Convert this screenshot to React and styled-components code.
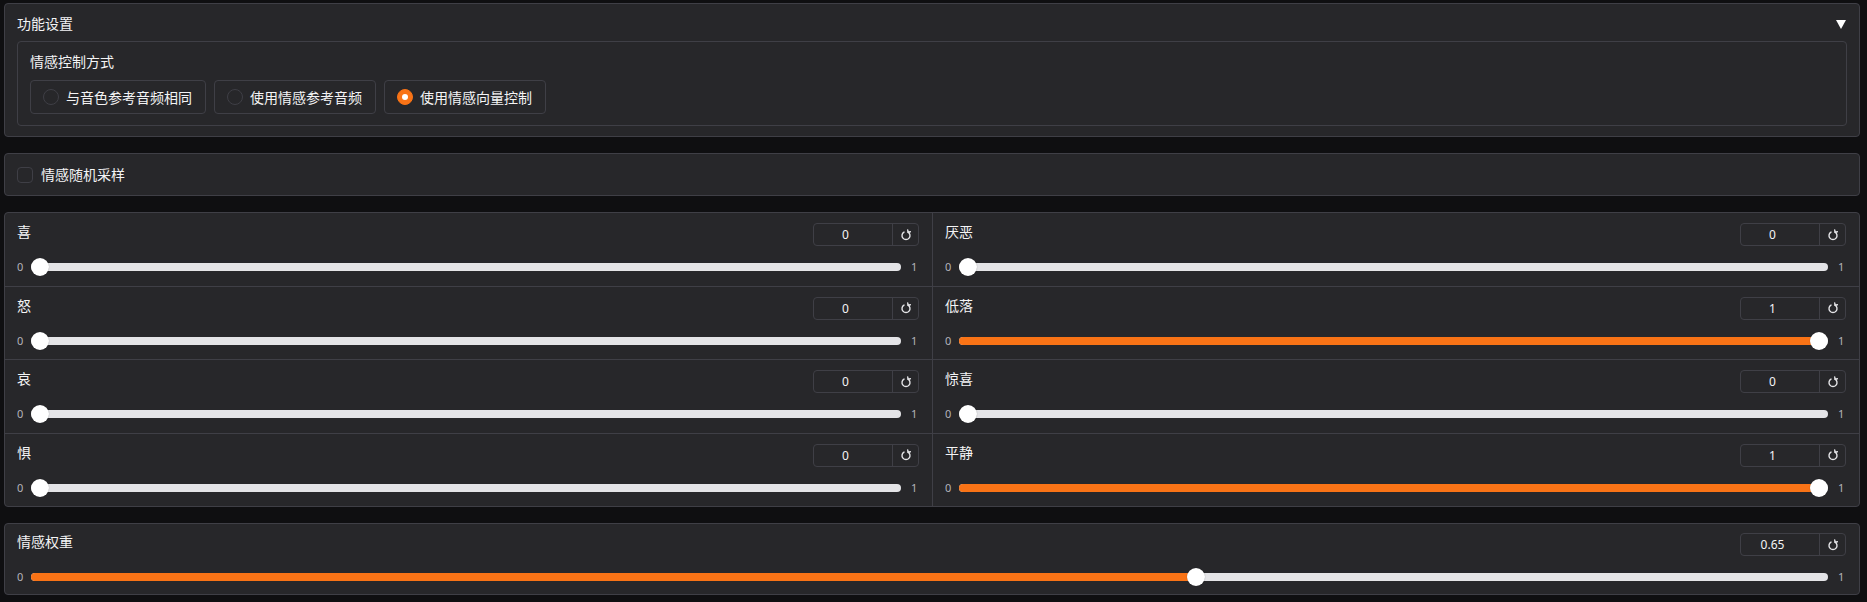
import React from "react";
import styled, { createGlobalStyle } from "styled-components";

const GlobalStyle = createGlobalStyle`
  html, body { margin: 0; padding: 0; background: #0f0f11; }
  body {
    font-family: "Noto Sans", "Noto Sans CJK SC", sans-serif;
    color: #f4f4f5;
  }
  * { box-sizing: border-box; }
`;

const Page = styled.div`
  display: flex;
  flex-direction: column;
  gap: 16px;
  padding: 3px 7px 6px 4px;
`;

const Panel = styled.section`
  background: #27272a;
  border: 1px solid #3f3f46;
  border-radius: 4px;
`;

const AccordionPanel = styled(Panel)`
  padding: 0 12px 10px 12px;
`;

const AccordionHeader = styled.div`
  display: flex;
  justify-content: space-between;
  align-items: center;
  padding: 11px 0 8px;
`;

const Title = styled.span`
  font-size: 14px;
  line-height: 18px;
  color: #f4f4f5;
`;

const Caret = styled.span`
  width: 0;
  height: 0;
  margin-right: 1px;
  border-left: 5px solid transparent;
  border-right: 5px solid transparent;
  border-top: 9px solid #ffffff;
`;

const Fieldset = styled.div`
  border: 1px solid #3f3f46;
  border-radius: 4px;
  padding: 11px 12px 11px;
`;

const FieldLabel = styled.div`
  font-size: 14px;
  line-height: 18px;
  margin-bottom: 9px;
  color: #f4f4f5;
`;

const RadioGroup = styled.div`
  display: flex;
  gap: 8px;
`;

const RadioItem = styled.label`
  display: inline-flex;
  align-items: center;
  gap: 7px;
  height: 34px;
  padding: 0 13px 0 12px;
  border: 1px solid #3f3f46;
  border-radius: 4px;
  background: #27272a;
  font-size: 14px;
  color: #f4f4f5;
  white-space: nowrap;
`;

const RadioDot = styled.span`
  width: 16px;
  height: 16px;
  border-radius: 50%;
  flex: none;
  display: flex;
  align-items: center;
  justify-content: center;
  border: 1px solid ${(p) => (p.$checked ? "#f97316" : "#3f3f46")};
  background: ${(p) => (p.$checked ? "#f97316" : "#27272a")};
  &::after {
    content: "";
    display: ${(p) => (p.$checked ? "block" : "none")};
    width: 6px;
    height: 6px;
    border-radius: 50%;
    background: #ffffff;
  }
`;

const CheckboxPanel = styled(Panel)`
  height: 43px;
  display: flex;
  align-items: center;
  gap: 8px;
  padding: 0 12px;
`;

const CheckBox = styled.span`
  width: 16px;
  height: 16px;
  border: 1px solid #3f3f46;
  border-radius: 4px;
  background: #27272a;
  flex: none;
`;

const CheckText = styled.span`
  font-size: 14px;
  line-height: 18px;
  color: #f4f4f5;
`;

const SliderGrid = styled(Panel)`
  display: grid;
  grid-template-columns: 1fr 1fr;
`;

const SliderColumn = styled.div`
  display: flex;
  flex-direction: column;
  border-left: ${(p) => (p.$divided ? "1px solid #3f3f46" : "none")};
`;

const SliderRow = styled.div`
  padding: 10px 13px 9.5px 12px;
  border-top: ${(p) => (p.$first ? "none" : "1px solid #3f3f46")};
`;

const WeightPanel = styled(Panel)`
  padding: 9px 13px 8px 12px;
`;

const FieldHeader = styled.div`
  display: flex;
  justify-content: space-between;
  align-items: flex-start;
`;

const SliderLabel = styled.span`
  font-size: 14px;
  line-height: 18px;
  color: #f4f4f5;
`;

const NumberBox = styled.div`
  display: flex;
  height: 23px;
  width: 106px;
  border: 1px solid #3f3f46;
  border-radius: 4px;
  overflow: hidden;
`;

const NumberValue = styled.div`
  flex: 1;
  display: flex;
  align-items: center;
  justify-content: center;
  padding-right: 15px;
  font-size: 12px;
  color: #f4f4f5;
`;

const ResetButton = styled.div`
  width: 26px;
  flex: none;
  display: flex;
  align-items: center;
  justify-content: center;
  border-left: 1px solid #3f3f46;
  color: #e4e4e7;
`;

const SliderLine = styled.div`
  display: flex;
  align-items: center;
  margin-top: 12px;
  height: 18px;
`;

const Bound = styled.span`
  font-size: 11px;
  line-height: 18px;
  color: #b4b4bb;
  flex: none;
  width: ${(p) => (p.$end ? "8px" : "6px")};
  text-align: left;
  margin: ${(p) => (p.$end ? "0 0 0 10px" : "0 8px 0 0")};
`;

const TrackArea = styled.div`
  position: relative;
  flex: 1;
  height: 18px;
  display: flex;
  align-items: center;
`;

const Track = styled.div`
  width: 100%;
  height: 8px;
  border-radius: 4px;
  background: #e4e4e7;
`;

const Fill = styled.div`
  position: absolute;
  left: 0;
  top: 5px;
  height: 8px;
  border-radius: 4px 0 0 4px;
  background: #f97316;
`;

const Thumb = styled.div`
  position: absolute;
  top: 0;
  width: 18px;
  height: 18px;
  border-radius: 50%;
  background: #ffffff;
  box-shadow: 0 0 1px rgba(0, 0, 0, 0.4);
`;

const ResetIcon = () => (
  <svg width="12" height="12" viewBox="0 0 12 12" fill="none">
    <path
      d="M4 3.1 A4 4 0 1 0 8 3.1"
      stroke="currentColor"
      strokeWidth="1.4"
      strokeLinecap="round"
    />
    <path
      d="M7.7 0.9 L8.05 3.25 L10.4 2.7"
      stroke="currentColor"
      strokeWidth="1.4"
      strokeLinecap="round"
      strokeLinejoin="round"
    />
  </svg>
);

const SliderField = ({ label, value, display }) => (
  <>
    <FieldHeader>
      <SliderLabel>{label}</SliderLabel>
      <NumberBox>
        <NumberValue>{display ?? String(value)}</NumberValue>
        <ResetButton>
          <ResetIcon />
        </ResetButton>
      </NumberBox>
    </FieldHeader>
    <SliderLine>
      <Bound>0</Bound>
      <TrackArea>
        <Track />
        {value > 0 && (
          <Fill style={{ width: `calc(9px + ${value} * (100% - 18px))` }} />
        )}
        <Thumb style={{ left: `calc(${value} * (100% - 18px))` }} />
      </TrackArea>
      <Bound $end>1</Bound>
    </SliderLine>
  </>
);

const leftEmotions = [
  { label: "喜", value: 0 },
  { label: "怒", value: 0 },
  { label: "哀", value: 0 },
  { label: "惧", value: 0 },
];

const rightEmotions = [
  { label: "厌恶", value: 0 },
  { label: "低落", value: 1 },
  { label: "惊喜", value: 0 },
  { label: "平静", value: 1 },
];

const radios = [
  { label: "与音色参考音频相同", checked: false },
  { label: "使用情感参考音频", checked: false },
  { label: "使用情感向量控制", checked: true },
];

export default function App() {
  return (
    <>
      <GlobalStyle />
      <Page>
        <AccordionPanel>
          <AccordionHeader>
            <Title>功能设置</Title>
            <Caret />
          </AccordionHeader>
          <Fieldset>
            <FieldLabel>情感控制方式</FieldLabel>
            <RadioGroup>
              {radios.map((r) => (
                <RadioItem key={r.label}>
                  <RadioDot $checked={r.checked} />
                  {r.label}
                </RadioItem>
              ))}
            </RadioGroup>
          </Fieldset>
        </AccordionPanel>

        <CheckboxPanel>
          <CheckBox />
          <CheckText>情感随机采样</CheckText>
        </CheckboxPanel>

        <SliderGrid>
          <SliderColumn>
            {leftEmotions.map((e, i) => (
              <SliderRow key={e.label} $first={i === 0}>
                <SliderField label={e.label} value={e.value} />
              </SliderRow>
            ))}
          </SliderColumn>
          <SliderColumn $divided>
            {rightEmotions.map((e, i) => (
              <SliderRow key={e.label} $first={i === 0}>
                <SliderField label={e.label} value={e.value} />
              </SliderRow>
            ))}
          </SliderColumn>
        </SliderGrid>

        <WeightPanel>
          <SliderField label="情感权重" value={0.65} display="0.65" />
        </WeightPanel>
      </Page>
    </>
  );
}
